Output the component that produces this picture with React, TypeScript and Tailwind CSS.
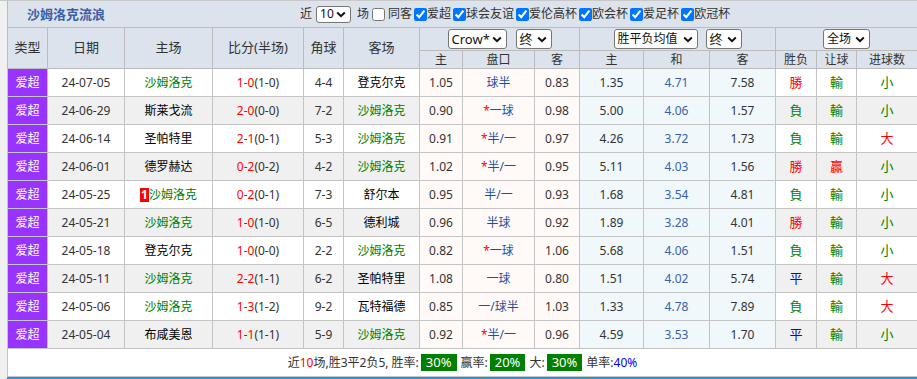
import React from "react";

type Row = {
  date: string;
  home: string;
  homeG: boolean;
  badge?: boolean;
  score: string;
  half: string;
  corner: string;
  away: string;
  awayG: boolean;
  o1: string;
  hc: string;
  star: boolean;
  o2: string;
  e1: string;
  e2: string;
  e3: string;
  res: string;
  rang: string;
  ou: string;
};

const rows: Row[] = [
  { date: "24-07-05", home: "沙姆洛克", homeG: true, score: "1-0", half: "(1-0)", corner: "4-4", away: "登克尔克", awayG: false, o1: "1.05", hc: "球半", star: false, o2: "0.83", e1: "1.35", e2: "4.71", e3: "7.58", res: "勝", rang: "輸", ou: "小" },
  { date: "24-06-29", home: "斯莱戈流", homeG: false, score: "2-0", half: "(0-0)", corner: "7-2", away: "沙姆洛克", awayG: true, o1: "0.90", hc: "一球", star: true, o2: "0.98", e1: "5.00", e2: "4.06", e3: "1.57", res: "負", rang: "輸", ou: "小" },
  { date: "24-06-14", home: "圣帕特里", homeG: false, score: "2-1", half: "(0-1)", corner: "5-3", away: "沙姆洛克", awayG: true, o1: "0.91", hc: "半/一", star: true, o2: "0.97", e1: "4.26", e2: "3.72", e3: "1.73", res: "負", rang: "輸", ou: "大" },
  { date: "24-06-01", home: "德罗赫达", homeG: false, score: "0-2", half: "(0-2)", corner: "4-2", away: "沙姆洛克", awayG: true, o1: "1.02", hc: "半/一", star: true, o2: "0.95", e1: "5.11", e2: "4.03", e3: "1.56", res: "勝", rang: "贏", ou: "小" },
  { date: "24-05-25", home: "沙姆洛克", homeG: true, badge: true, score: "0-2", half: "(0-1)", corner: "7-3", away: "舒尔本", awayG: false, o1: "0.95", hc: "半/一", star: false, o2: "0.93", e1: "1.68", e2: "3.54", e3: "4.81", res: "負", rang: "輸", ou: "小" },
  { date: "24-05-21", home: "沙姆洛克", homeG: true, score: "1-0", half: "(1-0)", corner: "6-5", away: "德利城", awayG: false, o1: "0.96", hc: "半球", star: false, o2: "0.92", e1: "1.89", e2: "3.28", e3: "4.01", res: "勝", rang: "輸", ou: "小" },
  { date: "24-05-18", home: "登克尔克", homeG: false, score: "1-0", half: "(0-0)", corner: "2-2", away: "沙姆洛克", awayG: true, o1: "0.82", hc: "一球", star: true, o2: "1.06", e1: "5.68", e2: "4.06", e3: "1.51", res: "負", rang: "輸", ou: "小" },
  { date: "24-05-11", home: "沙姆洛克", homeG: true, score: "2-2", half: "(1-1)", corner: "6-2", away: "圣帕特里", awayG: false, o1: "1.08", hc: "一球", star: false, o2: "0.80", e1: "1.51", e2: "4.02", e3: "5.74", res: "平", rang: "輸", ou: "大" },
  { date: "24-05-06", home: "沙姆洛克", homeG: true, score: "1-3", half: "(1-2)", corner: "9-2", away: "瓦特福德", awayG: false, o1: "0.85", hc: "一/球半", star: false, o2: "1.03", e1: "1.33", e2: "4.78", e3: "7.89", res: "負", rang: "輸", ou: "大" },
  { date: "24-05-04", home: "布咸美恩", homeG: false, score: "1-1", half: "(1-1)", corner: "5-9", away: "沙姆洛克", awayG: true, o1: "0.92", hc: "半/一", star: true, o2: "0.96", e1: "4.59", e2: "3.53", e3: "1.70", res: "平", rang: "輸", ou: "小" },
];

function Chev() {
  return (
    <svg width="10" height="7" viewBox="0 0 10 7" className="shrink-0">
      <path d="M1.2 1.5 L5 5.2 L8.8 1.5" fill="none" stroke="#111" strokeWidth="2" />
    </svg>
  );
}

function Sel({ label, cls }: { label: string; cls: string }) {
  return (
    <span
      className={
        "inline-flex items-center justify-between border border-[#767676] rounded-[3px] bg-white pl-[3px] pr-[4px] text-[#111] " +
        cls
      }
    >
      <span className="leading-none">{label}</span>
      <Chev />
    </span>
  );
}

const resColor = (r: string) =>
  r === "勝" ? "text-[#ff0000]" : r === "負" ? "text-[#008000]" : "text-[#0000ff]";

export default function App() {
  const td = "border border-[#c4c4c4] p-0 text-center";
  const th = "border border-[#bcbcbc] p-0 text-center font-normal text-[#333]";
  return (
    <div className="w-[917px] h-[379px] bg-[#f0f0f0] border-t border-[#c8c8c8] pl-[7px] overflow-hidden [font-family:'Noto_Sans','Noto_Sans_CJK_SC',sans-serif] text-[12px] text-[#333]">
      <div className="w-[910px] h-[26px] bg-[#dce3ec] border-l border-[#bcbcbc] flex items-center">
        <div className="w-[292px] pl-[19px] font-bold text-[13px] text-[#3a5fa6] pt-[1px]">沙姆洛克流浪</div>
        <span>近</span>
        <Sel label="10" cls="ml-[4px] w-[35px] h-[17px] text-[12px]" />
        <span className="ml-[6px]">场</span>
        <input type="checkbox" className="ml-[3px] mr-[3px] my-0 w-[13px] h-[13px]" />
        <span>同客</span>
        {["爱超", "球会友谊", "爱伦高杯", "欧会杯", "爱足杯", "欧冠杯"].map((l) => (
          <React.Fragment key={l}>
            <input type="checkbox" defaultChecked className="ml-[2px] mr-0 my-0 w-[13px] h-[13px]" />
            <span>{l}</span>
          </React.Fragment>
        ))}
      </div>
      <table className="border-collapse table-fixed w-[910px]">
        <colgroup>
          <col className="w-[40px]" />
          <col className="w-[77px]" />
          <col className="w-[88px]" />
          <col className="w-[91px]" />
          <col className="w-[40px]" />
          <col className="w-[76px]" />
          <col className="w-[43px]" />
          <col className="w-[72px]" />
          <col className="w-[45px]" />
          <col className="w-[64px]" />
          <col className="w-[66px]" />
          <col className="w-[66px]" />
          <col className="w-[41px]" />
          <col className="w-[40px]" />
          <col className="w-[61px]" />
        </colgroup>
        <thead className="bg-[#dce3ec]">
          <tr className="h-[23px]">
            <th rowSpan={2} className={th + " text-[13px]"}>类型</th>
            <th rowSpan={2} className={th + " text-[13px]"}>日期</th>
            <th rowSpan={2} className={th + " text-[13px]"}>主场</th>
            <th rowSpan={2} className={th + " text-[13px]"}>比分(半场)</th>
            <th rowSpan={2} className={th + " text-[13px]"}>角球</th>
            <th rowSpan={2} className={th + " text-[13px]"}>客场</th>
            <th colSpan={3} className={th}>
              <div className="flex items-center justify-center gap-[9px]">
                <Sel label="Crow*" cls="w-[59px] h-[20px] text-[13px]" />
                <Sel label="终" cls="w-[36px] h-[20px] text-[13px]" />
              </div>
            </th>
            <th colSpan={3} className={th}>
              <div className="flex items-center justify-center gap-[8px]">
                <Sel label="胜平负均值" cls="w-[84px] h-[20px] text-[12px]" />
                <Sel label="终" cls="w-[36px] h-[20px] text-[13px]" />
              </div>
            </th>
            <th colSpan={3} className={th}>
              <div className="flex items-center justify-center">
                <Sel label="全场" cls="w-[47px] h-[20px] text-[12px]" />
              </div>
            </th>
          </tr>
          <tr className="h-[18px] text-[12px]">
            {["主", "盘口", "客", "主", "和", "客", "胜负", "让球", "进球数"].map((h, i) => (
              <th key={i} className={th + " leading-none"}>{h}</th>
            ))}
          </tr>
        </thead>
        <tbody>
          {rows.map((r, i) => {
            const bg = i % 2 === 0 ? "bg-white" : "bg-[#f0f0f0]";
            return (
              <tr key={i} className={"h-[28px] " + bg}>
                <td className={td + " bg-[#9933ff] text-white"}>爱超</td>
                <td className={td}>{r.date}</td>
                <td className={td + (r.homeG ? " text-[#008000]" : " text-black")}>
                  {r.badge && (
                    <span className="inline-block bg-[#ff0000] text-white font-bold leading-[14px] px-[1px] align-middle mr-[0px]">1</span>
                  )}
                  <span className="align-middle">{r.home}</span>
                </td>
                <td className={td}>
                  <span className="text-[#ff0000]">{r.score}</span>
                  <span className="text-[#333]">{r.half}</span>
                </td>
                <td className={td}>{r.corner}</td>
                <td className={td + (r.awayG ? " text-[#008000]" : " text-black")}>{r.away}</td>
                <td className={td + " bg-[#fffaf7]"}>{r.o1}</td>
                <td className={td + " bg-[#fffaf7] text-[#1e4f9e]"}>
                  {r.star && <span className="text-[#ff0000]">*</span>}
                  {r.hc}
                </td>
                <td className={td + " bg-[#fffaf7]"}>{r.o2}</td>
                <td className={td + " bg-[#f0f8fc]"}>{r.e1}</td>
                <td className={td + " bg-[#f0f8fc] text-[#3a62a8]"}>{r.e2}</td>
                <td className={td + " bg-[#f0f8fc]"}>{r.e3}</td>
                <td className={td + " text-[13px] " + resColor(r.res)}>{r.res}</td>
                <td className={td + " text-[13px] " + (r.rang === "贏" ? "text-[#ff0000]" : "text-[#008000]")}>{r.rang}</td>
                <td className={td + " text-[13px] " + (r.ou === "大" ? "text-[#ff0000]" : "text-[#008000]")}>{r.ou}</td>
              </tr>
            );
          })}
          <tr className="h-[28px] bg-white">
            <td colSpan={15} className={td}>
              <div className="flex items-center justify-center text-[#333]">
                <span>近</span>
                <span className="text-[#ff0000]">10</span>
                <span>场,胜3平2负5, 胜率:</span>
                <span className="ml-[2px] bg-[#008000] text-white text-[13px] leading-[17px] px-[5px]">30%</span>
                <span className="ml-[4px]">赢率:</span>
                <span className="ml-[2px] bg-[#008000] text-white text-[13px] leading-[17px] px-[5px]">20%</span>
                <span className="ml-[4px]">大:</span>
                <span className="ml-[2px] bg-[#008000] text-white text-[13px] leading-[17px] px-[5px]">30%</span>
                <span className="ml-[4px]">单率:</span>
                <span className="text-[#0000ff]">40%</span>
              </div>
            </td>
          </tr>
        </tbody>
      </table>
      <div className="w-[910px] h-[3px] bg-[#2693d9]" />
    </div>
  );
}
